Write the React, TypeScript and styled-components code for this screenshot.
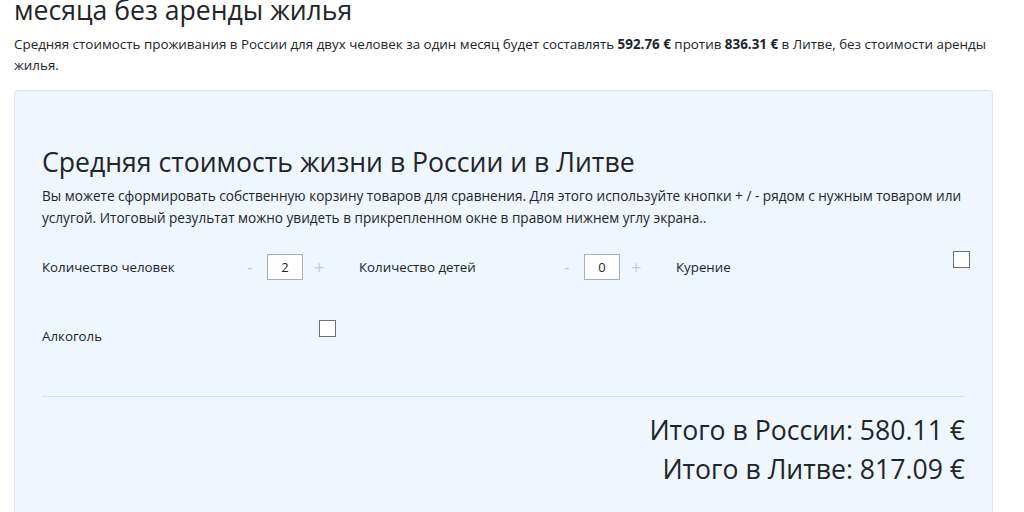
import styled, { createGlobalStyle } from 'styled-components';

const GlobalStyle = createGlobalStyle`
  body {
    margin: 0;
    background: #fff;
    font-family: 'Open Sans', 'Noto Sans', sans-serif;
    color: #212529;
  }
`;

const Page = styled.div`
  padding: 0 31px 0 14px;
`;

const PageTitle = styled.h2`
  margin: -4px 0 0;
  font-size: 26.6px;
  font-weight: 400;
  line-height: 28px;
`;

const Lead = styled.p`
  margin: 10px 0 14px;
  font-size: 13.4px;
  line-height: 21px;
  b {
    font-weight: 700;
  }
`;

const Card = styled.section`
  background: #eff6fd;
  border: 1px solid #dfe4ea;
  border-radius: 4px;
  padding: 51px 27px 40px;
`;

const CardTitle = styled.h3`
  margin: 0;
  font-size: 26.6px;
  font-weight: 400;
  line-height: 40px;
`;

const Hint = styled.p`
  margin: 3px 0 0;
  font-size: 13.6px;
  line-height: 22px;
`;

const Options = styled.div`
  display: grid;
  grid-template-columns: repeat(3, 317px);
  row-gap: 36px;
  margin-top: 21px;
`;

const Option = styled.div`
  display: grid;
  grid-template-columns: 204px 1fr;
  align-items: center;
  height: 33px;
  font-size: 13.3px;
`;

const Counter = styled.div`
  display: flex;
  align-items: center;
`;

const Step = styled.span<{ $side: 'left' | 'right' }>`
  width: 8px;
  color: #c9ced3;
  font-size: 18px;
  text-align: center;
  margin: ${(p) => (p.$side === 'left' ? '0 13px 0 0' : '0 0 0 11px')};
`;

const Value = styled.div`
  width: 34px;
  height: 24px;
  border: 1px solid #a9aeb3;
  background: #fff;
  display: flex;
  align-items: center;
  justify-content: center;
  font-size: 13px;
`;

const Check = styled.span`
  align-self: start;
  margin: 1px 0 0 73px;
  width: 15px;
  height: 15px;
  border: 1px solid #6c7075;
  background: #fff;
`;

const Divider = styled.hr`
  margin: 44px 0 0;
  border: 0;
  border-top: 1px solid #d9e1ea;
`;

const Totals = styled.div`
  text-align: right;
  padding-top: 14px;
  font-size: 26.6px;
  line-height: 39px;
`;

type Item =
  | { label: string; kind: 'counter'; value: number }
  | { label: string; kind: 'check' };

const items: Item[] = [
  { label: 'Количество человек', kind: 'counter', value: 2 },
  { label: 'Количество детей', kind: 'counter', value: 0 },
  { label: 'Курение', kind: 'check' },
  { label: 'Алкоголь', kind: 'check' },
];

export default function App() {
  return (
    <Page>
      <GlobalStyle />
      <PageTitle>месяца без аренды жилья</PageTitle>
      <Lead>
        Средняя стоимость проживания в России для двух человек за один месяц будет составлять{' '}
        <b>592.76 €</b> против <b>836.31 €</b> в Литве, без стоимости аренды жилья.
      </Lead>
      <Card>
        <CardTitle>Средняя стоимость жизни в России и в Литве</CardTitle>
        <Hint>
          Вы можете сформировать собственную корзину товаров для сравнения. Для этого используйте кнопки + / -
          рядом с нужным товаром или услугой. Итоговый результат можно увидеть в прикрепленном окне в правом
          нижнем углу экрана..
        </Hint>
        <Options>
          {items.map((it) => (
            <Option key={it.label}>
              <span>{it.label}</span>
              {it.kind === 'counter' ? (
                <Counter>
                  <Step $side="left">-</Step>
                  <Value>{it.value}</Value>
                  <Step $side="right">+</Step>
                </Counter>
              ) : (
                <Check />
              )}
            </Option>
          ))}
        </Options>
        <Divider />
        <Totals>
          <div>Итого в России: 580.11 €</div>
          <div>Итого в Литве: 817.09 €</div>
        </Totals>
      </Card>
    </Page>
  );
}
